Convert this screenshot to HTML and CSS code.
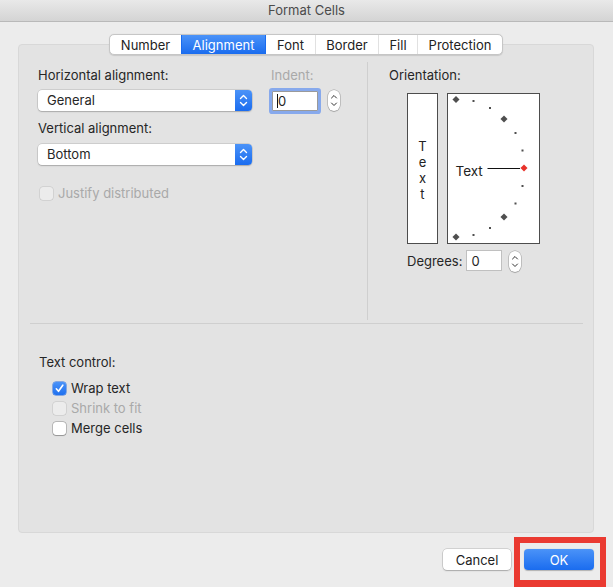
FILE: index.html
```html
<!DOCTYPE html>
<html>
<head>
<meta charset="utf-8">
<title>Format Cells</title>
<link rel="stylesheet" href="styles.css">
</head>
<body>
<div class="titlebar">Format Cells</div>
<div class="window">
  <div class="panel">
    <div class="tabs">
      <span class="tab t-number">Number</span><span class="tab t-align active">Alignment</span><span class="tab t-font">Font</span><span class="tab t-border">Border</span><span class="tab t-fill">Fill</span><span class="tab t-prot">Protection</span>
    </div>
    <div class="upper">
      <div class="left">
        <div class="row1">
          <div class="field">
            <div class="label">Horizontal alignment:</div>
            <div class="popup">
              <span class="popup-text">General</span>
              <span class="popup-arrows"><svg width="17" height="21" viewBox="0 0 17 21"><path d="M5.5 8.5 L8.5 5.5 L11.5 8.5 M5.5 12.5 L8.5 15.5 L11.5 12.5" fill="none" stroke="#fff" stroke-width="1.4" stroke-linecap="round" stroke-linejoin="round"/></svg></span>
            </div>
          </div>
          <div class="indent">
            <div class="label disabled indent-label">Indent:</div>
            <div class="indent-row">
              <div class="input focused"><span class="caret"></span>0</div>
              <div class="stepper"><svg width="12" height="21" viewBox="0 0 12 21"><path d="M3.5 8 L6 5.5 L8.5 8 M3.5 13 L6 15.5 L8.5 13" fill="none" stroke="#333" stroke-width="1" stroke-linecap="round" stroke-linejoin="round"/></svg></div>
            </div>
          </div>
        </div>
        <div class="label vlabel">Vertical alignment:</div>
        <div class="popup popup2">
          <span class="popup-text">Bottom</span>
          <span class="popup-arrows"><svg width="17" height="21" viewBox="0 0 17 21"><path d="M5.5 8.5 L8.5 5.5 L11.5 8.5 M5.5 12.5 L8.5 15.5 L11.5 12.5" fill="none" stroke="#fff" stroke-width="1.4" stroke-linecap="round" stroke-linejoin="round"/></svg></span>
        </div>
        <div class="check disabled justify"><span class="box box-disabled"></span><span>Justify distributed</span></div>
      </div>
      <div class="vdivider"></div>
      <div class="right">
        <div class="label">Orientation:</div>
        <div class="orient">
          <div class="vtext"><span>T</span><span>e</span><span>x</span><span>t</span></div>
          <div class="arc">
            <svg width="91" height="149" viewBox="0 0 91 149">
              <g fill="#4f4f4f">
                <rect x="5.5" y="3" width="5" height="5" transform="rotate(45 8 5.5)"/>
                <rect x="53.5" y="22.5" width="5" height="5" transform="rotate(45 56 25)"/>
                <rect x="53.5" y="120.5" width="5" height="5" transform="rotate(45 56 123)"/>
                <rect x="5.5" y="140.5" width="5" height="5" transform="rotate(45 8 143)"/>
                <rect x="24.5" y="6" width="2" height="2"/>
                <rect x="41" y="13" width="2" height="2"/>
                <rect x="66.5" y="38" width="2" height="2"/>
                <rect x="73.5" y="55.5" width="2" height="2"/>
                <rect x="73.5" y="91" width="2" height="2"/>
                <rect x="66.5" y="108.5" width="2" height="2"/>
                <rect x="41" y="133" width="2" height="2"/>
                <rect x="24.5" y="140" width="2" height="2"/>
              </g>
              <line x1="39.5" y1="74.5" x2="72" y2="74.5" stroke="#111" stroke-width="1"/>
              <rect x="73.5" y="71.5" width="5" height="5" fill="#e8322a" transform="rotate(45 76 74)"/>
              <text x="7.5" y="82" class="arc-text">Text</text>
            </svg>
          </div>
        </div>
        <div class="degrees">
          <span class="label">Degrees:</span>
          <div class="input small">0</div>
          <div class="stepper"><svg width="12" height="21" viewBox="0 0 12 21"><path d="M3.5 8 L6 5.5 L8.5 8 M3.5 13 L6 15.5 L8.5 13" fill="none" stroke="#333" stroke-width="1" stroke-linecap="round" stroke-linejoin="round"/></svg></div>
        </div>
      </div>
    </div>
    <div class="hrule"></div>
    <div class="lower">
      <div class="label">Text control:</div>
      <div class="checks">
        <div class="check"><span class="box box-checked"><svg width="13" height="13" viewBox="0 0 13 13"><path d="M3.3 6.8 L5.5 9.3 L9.8 3.2" fill="none" stroke="#fff" stroke-width="1.6" stroke-linecap="round" stroke-linejoin="round"/></svg></span><span>Wrap text</span></div>
        <div class="check disabled"><span class="box box-disabled"></span><span>Shrink to fit</span></div>
        <div class="check"><span class="box"></span><span>Merge cells</span></div>
      </div>
    </div>
  </div>
  <div class="footer">
    <button class="btn cancel">Cancel</button>
    <div class="ok-wrap">
      <button class="btn ok">OK</button>
      <div class="highlight"></div>
    </div>
  </div>
</div>
</body>
</html>
```
FILE: styles.css
```css
* { box-sizing: border-box; }
html, body { margin: 0; padding: 0; }
body {
  width: 613px;
  height: 587px;
  overflow: hidden;
  background: #ececec;
  font-family: "Inter", "Liberation Sans", sans-serif;
  font-size: 13px;
  line-height: 16px;
  color: #262626;
}
.titlebar {
  height: 22px;
  border-bottom: 1px solid #b9b9b9;
  background: linear-gradient(#e9e9e9, #d4d4d4);
  color: #4b4b4b;
  text-align: center;
  line-height: 21px;
}
.window {
  padding: 22px 19px 0 18px;
}
.panel {
  height: 489px;
  background: #e3e3e3;
  border: 1px solid #d8d8d8;
  border-radius: 4px;
}
.tabs {
  display: flex;
  width: max-content;
  margin: -11px auto 0;
  height: 21px;
  background: #fff;
  border: 1px solid #c6c6c6;
  border-radius: 5px;
  overflow: hidden;
  box-shadow: 0 0.5px 1px rgba(0,0,0,0.12);
}
.tab {
  display: flex;
  align-items: center;
  justify-content: center;
  height: 19px;
  border-left: 1px solid #e1e1e1;
  color: #222;
}
.tab:first-child { border-left: none; }
.t-number { width: 71px; }
.t-align { width: 84px; }
.t-font { width: 50px; }
.t-border { width: 63px; }
.t-fill { width: 39px; }
.t-prot { width: 85px; }
.tab.active {
  background: linear-gradient(#4b93f8, #1a6cef);
  color: #fff;
  border-left-color: #1a6cef;
}
.tab.active + .tab { border-left-color: #1a6cef; }

.upper {
  display: flex;
  height: 268px;
}
.left {
  width: 348px;
  padding: 12px 0 0 19px;
}
.row1 { display: flex; }
.field { width: 214px; }
.label { line-height: 16px; white-space: nowrap; }
.disabled { color: #a9a9a9; }
.popup {
  display: flex;
  height: 21px;
  margin-top: 7px;
  background: #fff;
  border-radius: 4px;
  box-shadow: 0 0 0 0.5px rgba(0,0,0,0.18), 0 1px 1.5px rgba(0,0,0,0.18);
  overflow: hidden;
}
.popup2 { width: 214px; margin-top: 8px; }
.popup-text {
  flex: 1;
  padding-left: 9px;
  line-height: 21px;
}
.popup-arrows {
  width: 17px;
  height: 21px;
  background: linear-gradient(#4b93f8, #1a6cef);
}
.popup-arrows svg { display: block; }
.indent { margin-left: 20px; }
.indent-label { margin-left: -1px; }
.indent-row { display: flex; align-items: flex-start; }
.input {
  background: #fff;
  border: 1px solid #c4c4c4;
  height: 20px;
  line-height: 18px;
  padding-left: 5px;
  display: flex;
  align-items: center;
}
.input.focused {
  width: 46px;
  margin-top: 8px;
  border-color: #9a9a9a;
  border-radius: 1px;
  box-shadow: 0 0 0 3px #87a9ec;
  padding-left: 4px;
}
.caret {
  width: 1px;
  height: 14px;
  background: #111;
  margin-right: 0;
}
.stepper {
  width: 12px;
  height: 21px;
  background: #fff;
  border-radius: 6px;
  box-shadow: 0 0 0 0.5px rgba(0,0,0,0.3), 0 1px 1px rgba(0,0,0,0.15);
}
.stepper svg { display: block; }
.indent-row .stepper { margin-left: 10px; margin-top: 7px; }
.vlabel { margin-top: 9px; }
.check {
  display: flex;
  align-items: center;
  height: 20px;
  gap: 5px;
}
.justify { margin-top: 18px; margin-left: 2px; }
.box {
  width: 13px;
  height: 13px;
  border-radius: 3px;
  background: #fff;
  box-shadow: 0 0 0 0.5px rgba(0,0,0,0.35), 0 0.5px 1px rgba(0,0,0,0.2);
  flex: none;
}
.box svg { display: block; }
.box-disabled {
  background: #ececec;
  box-shadow: 0 0 0 0.5px rgba(0,0,0,0.15);
}
.box-checked {
  background: linear-gradient(#4b93f8, #1f70ef);
  box-shadow: 0 0 0 0.5px #2a6ee0;
}
.vdivider {
  width: 1px;
  background: #cfcfcf;
  margin: 7px 0 3px;
}
.right {
  padding: 12px 0 0 21px;
}
.orient {
  display: flex;
  gap: 9px;
  margin: 10px 0 0 18px;
}
.vtext {
  width: 31px;
  height: 151px;
  background: #fff;
  border: 1px solid #4d4d4d;
  display: flex;
  flex-direction: column;
  align-items: center;
  justify-content: center;
  padding-top: 3px;
  line-height: 16px;
  color: #222;
}
.arc {
  width: 93px;
  height: 151px;
  background: #fff;
  border: 1px solid #4d4d4d;
}
.arc svg { display: block; }
.arc-text {
  font-family: "Inter", "Liberation Sans", sans-serif;
  font-size: 13.5px;
  fill: #222;
}
.degrees {
  display: flex;
  align-items: center;
  margin: 5px 0 0 18px;
}
.input.small {
  width: 36px;
  height: 21px;
  margin-left: 4px;
  padding-left: 4px;
  border-color: #c0c0c0;
}
.degrees .stepper { margin-left: 7px; margin-top: 2px; }
.hrule {
  height: 1px;
  background: #cfcfcf;
  margin: 0 10px 0 11px;
}
.lower {
  padding: 30px 0 0 20px;
}
.checks {
  margin: 8px 0 0 14px;
}
.footer {
  display: flex;
  justify-content: flex-end;
  gap: 13px;
  margin-top: 16px;
}
.btn {
  font-family: "Inter", "Liberation Sans", sans-serif;
  font-size: 13px;
  height: 21px;
  border: none;
  border-radius: 4px;
  padding: 0;
}
.cancel {
  width: 68px;
  background: #fff;
  color: #222;
  box-shadow: 0 0 0 0.5px rgba(0,0,0,0.22), 0 1px 1.5px rgba(0,0,0,0.2);
}
.ok-wrap { position: relative; }
.ok {
  width: 70px;
  color: #fff;
  background: linear-gradient(#4b93f8, #1a6cef);
  box-shadow: 0 0.5px 1px rgba(0,0,0,0.25);
  display: block;
}
.highlight {
  position: absolute;
  left: -10px;
  right: -12px;
  top: -12px;
  bottom: -17px;
  border: 6px solid #ea3a31;
  border-bottom-width: 7px;
}
```
